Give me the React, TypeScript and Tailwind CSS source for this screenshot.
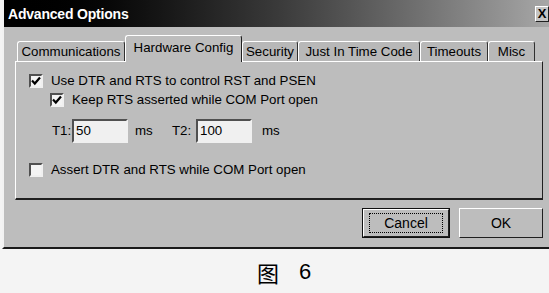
import React from "react";

const raised =
  "border border-t-white border-l-white border-r-[#202020] border-b-[#202020]";
const sunken =
  "border-2 border-t-[#505050] border-l-[#505050] border-r-[#f0f0f0] border-b-[#f0f0f0]";

function Check({ on }: { on: boolean }) {
  return (
    <span
      className={`w-[14px] h-[14px] shrink-0 bg-[#f4f4f4] flex items-center justify-center ${sunken}`}
    >
      {on && (
        <svg width="10" height="10" viewBox="0 0 10 10">
          <path d="M1 4.5 L3.8 7.5 L9 1.5" stroke="#000" strokeWidth="2.2" fill="none" />
        </svg>
      )}
    </span>
  );
}

function Tab({ label, w, active }: { label: string; w: string; active?: boolean }) {
  if (active)
    return (
      <div
        className={`${w} h-[27px] -mb-[1px] z-10 bg-[#bdbdbd] border-t border-l border-r border-t-white border-l-white border-r-[#202020] rounded-t-[3px] flex items-center justify-center pb-[3px]`}
      >
        {label}
      </div>
    );
  return (
    <div
      className={`${w} h-[20px] bg-[#b8b8b8] border-t border-l border-r border-t-white border-l-white border-r-[#303030] rounded-t-[3px] flex items-center justify-center`}
    >
      {label}
    </div>
  );
}

export default function App() {
  return (
    <div
      className="w-[549px] h-[293px] overflow-hidden bg-[#f4f4f4] text-black"
      style={{ fontFamily: '"Liberation Sans", Arial, sans-serif' }}
    >
      {/* dialog */}
      <div className="ml-[2px] w-[549px] h-[249px] bg-[#bdbdbd] border-l-2 border-l-[#f2f2f2] border-b-2 border-b-[#1a1a1a] flex flex-col">
        {/* title bar */}
        <div className="h-[27px] flex items-center justify-between pl-[4px] pr-[2px] bg-gradient-to-r from-[#000000] via-[#3a3a3a] to-[#a8a8a8]">
          <span className="text-white font-bold text-[14px] tracking-[-0.2px] pt-[1px]">Advanced Options</span>
          <span
            className={`w-[14px] h-[16px] bg-[#c4c4c4] ${raised} flex items-center justify-center text-[13px] leading-none font-bold`}
          >
            X
          </span>
        </div>

        {/* tabs */}
        <div className="mt-[8px] ml-[11px] flex items-end text-[13.3px]">
          <div className="w-[2px]" />
          <Tab label="Communications" w="w-[108px]" />
          <Tab label="Hardware Config" w="w-[117px]" active />
          <Tab label="Security" w="w-[56px]" />
          <Tab label="Just In Time Code" w="w-[122px]" />
          <Tab label="Timeouts" w="w-[68px]" />
          <Tab label="Misc" w="w-[47px]" />
        </div>

        {/* panel */}
        <div className="ml-[11px] w-[528px] h-[139px] bg-[#bdbdbd] border border-t-white border-l-white border-r-[#202020] border-b-[#202020] border-b-2 pl-[13px] pt-[12px] text-[13.3px] flex flex-col">
          <div className="flex items-center gap-[8px] h-[14px]">
            <Check on />
            <span>Use DTR and RTS to control RST and PSEN</span>
          </div>
          <div className="flex items-center gap-[8px] h-[14px] mt-[5px] ml-[21px]">
            <Check on />
            <span>Keep RTS asserted while COM Port open</span>
          </div>
          <div className="flex items-center mt-[12px] ml-[23px] h-[24px]">
            <span className="w-[20px]">T1:</span>
            <span className={`w-[56px] h-[24px] bg-[#f0f0f0] ${sunken} pl-[2px] leading-[20px]`}>50</span>
            <span className="ml-[7px] w-[37px]">ms</span>
            <span className="w-[24px]">T2:</span>
            <span className={`w-[56px] h-[24px] bg-[#f0f0f0] ${sunken} pl-[2px] leading-[20px]`}>100</span>
            <span className="ml-[10px]">ms</span>
          </div>
          <div className="flex items-center gap-[8px] h-[14px] mt-[20px]">
            <Check on={false} />
            <span>Assert DTR and RTS while COM Port open</span>
          </div>
        </div>

        {/* buttons */}
        <div className="mt-[8px] flex justify-end gap-[9px] pr-[8px] text-[14px]">
          <div className="w-[88px] h-[30px] border border-[#101010] bg-[#bdbdbd]">
            <div className={`w-full h-full ${raised} flex items-center justify-center`}>
              <span className="border border-dotted border-black w-[74px] h-[20px] flex items-center justify-center">
                Cancel
              </span>
            </div>
          </div>
          <div className={`w-[84px] h-[30px] ${raised} flex items-center justify-center`}>OK</div>
        </div>
      </div>

      {/* caption */}
      <div
        className="mt-[12px] ml-[257px] flex items-center gap-[20px] text-[22px] leading-none"
        style={{ fontFamily: '"Noto Sans CJK SC", "Liberation Sans", sans-serif' }}
      >
        <span>图</span>
        <span style={{ fontFamily: '"Liberation Sans", sans-serif' }}>6</span>
      </div>
    </div>
  );
}
